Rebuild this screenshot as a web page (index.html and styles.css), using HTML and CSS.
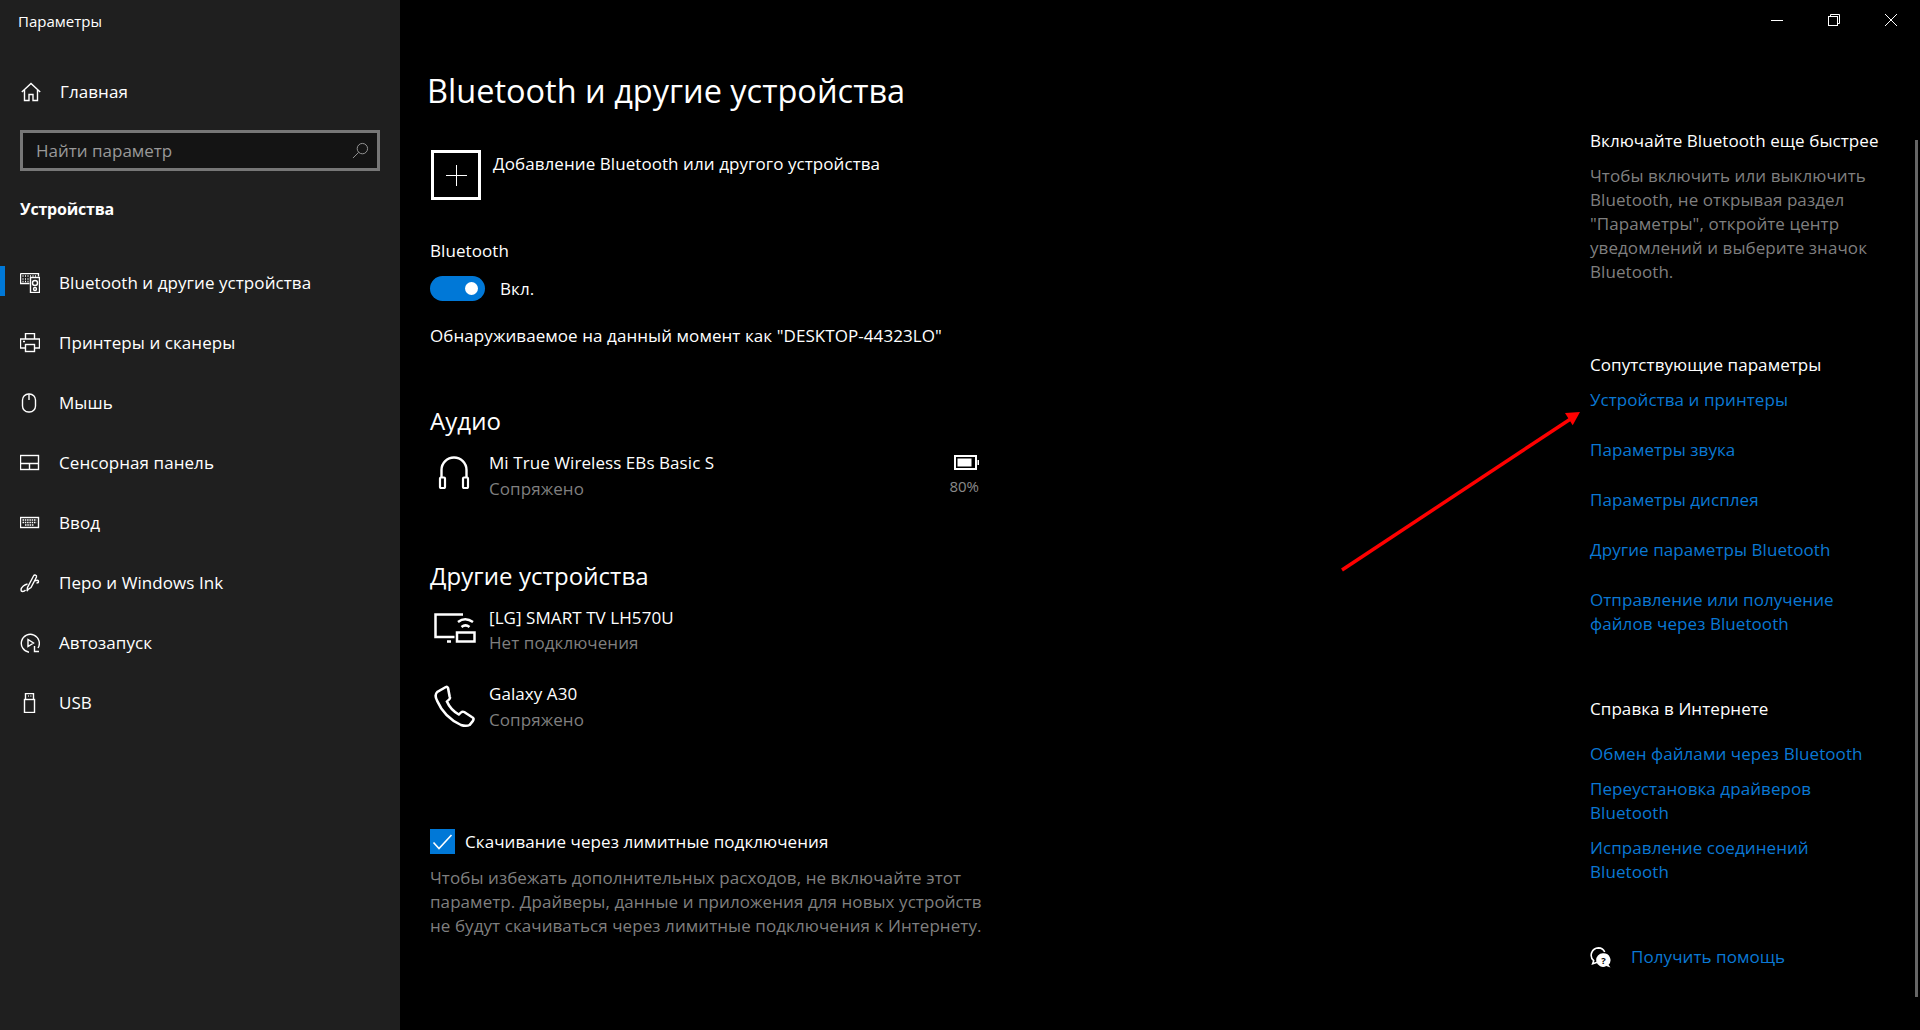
FILE: index.html
```html
<!DOCTYPE html>
<html lang="ru">
<head>
<meta charset="utf-8">
<title>Параметры</title>
<link rel="stylesheet" href="styles.css">
</head>
<body>
<div class="app">
  <aside class="sidebar">
    <div class="app-title">Параметры</div>
    <div class="nav-row home">
      <svg class="nav-icon" viewBox="0 0 20 20"><path d="M.8 10 10 1.500 19.200 10M3.500 8v10.500h4.500v-6h4v6h4.500V8"/></svg>
      <span>Главная</span>
    </div>
    <div class="search">
      <span class="search-text">Найти параметр</span>
      <svg class="search-icon" viewBox="0 0 18 18"><circle cx="11" cy="7" r="5.500"/><path d="M7 11 1 17"/></svg>
    </div>
    <div class="group-title">Устройства</div>
    <nav class="nav">
      <div class="nav-row active">
        <svg class="nav-icon" viewBox="0 0 20 20"><path d="M.5.500h18v3M.5.500v10h9"/><path d="M2.500 3h1M5 3h1M7.500 3h1M10 3h1M12.500 3h1M15 3h1M2.500 6h1M5 6h1M7.500 6h1M2.500 8.500h1M5 8.500h1M7.500 8.500h1" stroke-width="1.500"/><rect x="10.500" y="4.500" width="9" height="15"/><circle cx="15" cy="10" r="2.500"/><circle cx="15" cy="16" r="1.500"/></svg>
        <span>Bluetooth и другие устройства</span>
      </div>
      <div class="nav-row">
        <svg class="nav-icon" viewBox="0 0 20 20"><path d="M5.500 6V.5h9V6M5 15H.5V6h19v9H15"/><rect x="5.500" y="11.500" width="9" height="7"/><path d="M3 8.500h2"/></svg>
        <span>Принтеры и сканеры</span>
      </div>
      <div class="nav-row">
        <svg class="nav-icon" viewBox="0 0 20 20"><rect x="2.500" y="1" width="13" height="18" rx="6"/><path d="M9 1v6"/></svg>
        <span>Мышь</span>
      </div>
      <div class="nav-row">
        <svg class="nav-icon" viewBox="0 0 20 20"><rect x=".5" y="2.500" width="18" height="14"/><path d="M.5 10.500h18M9.500 10.500v6"/></svg>
        <span>Сенсорная панель</span>
      </div>
      <div class="nav-row">
        <svg class="nav-icon" viewBox="0 0 20 20"><rect x=".5" y="4.500" width="18" height="10"/><path d="M2.500 7h14M2.500 9.500h14M5 12h9" stroke-width="1.500" stroke-dasharray="1.500 .8"/></svg>
        <span>Ввод</span>
      </div>
      <div class="nav-row">
        <svg class="nav-icon" viewBox="0 0 20 20"><path d="M8 16.500 7 18l.5-3.500L13.500 3c1-1.800 3.500-.8 3 1L11 14.500ZM15 8c1.500-1 3.500-1 3.500.5 0 1-1 1.500-2 1.500M7.500 11C5 11.500 1 14 1 17c0 2 3 2 4.500 0"/></svg>
        <span>Перо и Windows Ink</span>
      </div>
      <div class="nav-row">
        <svg class="nav-icon" viewBox="0 0 20 20"><path d="M9 19.200A9 9 0 1 1 18 15M14.500 13v5.500h4.500M8 6.500v7l5.500-3.500Z"/></svg>
        <span>Автозапуск</span>
      </div>
      <div class="nav-row">
        <svg class="nav-icon" viewBox="0 0 20 20"><rect x="4.500" y="6.500" width="10" height="13"/><path d="M5.500 6.500V.5h8v6M8 3h.8M10.500 3h.8"/></svg>
        <span>USB</span>
      </div>
    </nav>
  </aside>

  <main class="main">
    <header class="window-bar">
      <button class="win-btn" type="button" aria-label="Свернуть"><svg viewBox="0 0 12 12"><path d="M0 6.500h12"/></svg></button>
      <button class="win-btn" type="button" aria-label="Восстановить"><svg viewBox="0 0 12 12"><rect x=".5" y="2.500" width="9" height="9"/><path d="M2.500 2.500v-2h9v9h-2"/></svg></button>
      <button class="win-btn" type="button" aria-label="Закрыть"><svg viewBox="0 0 12 12"><path d="M0 0 12 12M12 0 0 12"/></svg></button>
    </header>
    <div class="columns">
      <section class="content">
        <h1 class="page-title">Bluetooth и другие устройства</h1>
        <div class="add-row">
          <div class="add-box"><svg viewBox="0 0 21 21"><path d="M10.500 0v21M0 10.500h21"/></svg></div>
          <span class="add-text">Добавление Bluetooth или другого устройства</span>
        </div>
        <div class="line bt-label">Bluetooth</div>
        <div class="toggle-row">
          <span class="toggle"><span class="knob"></span></span>
          <span class="toggle-text">Вкл.</span>
        </div>
        <div class="line discover">Обнаруживаемое на данный момент как "DESKTOP-44323LO"</div>

        <h2 class="section audio">Аудио</h2>
        <div class="device first-audio">
          <div class="device-icon">
            <svg class="headphones" viewBox="0 0 32 33"><path d="M3.500 22V14a12.500 12.500 0 0 1 25 0v8" stroke-width="2.400"/><rect x="2" y="21.500" width="5" height="10.500" rx="1" stroke-width="2.200"/><rect x="25" y="21.500" width="5" height="10.500" rx="1" stroke-width="2.200"/></svg>
          </div>
          <div class="device-info">
            <div class="device-name">Mi True Wireless EBs Basic S</div>
            <div class="device-state">Сопряжено</div>
          </div>
          <div class="battery">
            <svg class="battery-icon" viewBox="0 0 25 15"><rect x="1" y="1" width="21" height="13" stroke-width="2"/><rect x="3.500" y="3.500" width="14" height="8" class="fill"/><rect x="23.500" y="5" width="1.500" height="5" class="fill"/></svg>
            <span class="battery-level">80%</span>
          </div>
        </div>

        <h2 class="section others">Другие устройства</h2>
        <div class="device first-other">
          <div class="device-icon">
            <svg class="tv" viewBox="0 0 42 30"><path d="M29 1.500H1.500v22.500h19M13 28.500h4" stroke-width="2.500"/><rect x="23" y="19.500" width="17.500" height="9" stroke-width="2.500"/><path d="M24 9c4.500-3.500 10-3.500 15 0M27.500 14c2.500-2 5.500-2 8 0" stroke-width="2.500"/></svg>
          </div>
          <div class="device-info">
            <div class="device-name">[LG] SMART TV LH570U</div>
            <div class="device-state">Нет подключения</div>
          </div>
        </div>
        <div class="device second-other">
          <div class="device-icon">
            <svg class="phone" viewBox="0 0 38 42" preserveAspectRatio="none"><path d="M11 2 3 7c-2 2-2 5 0 9 4 10 12 19 22 24 3 1 6 1 8 0l3-4c1-2 1-3-1-4l-7-5c-1-.5-2-.5-3 .5l-2 2c-5-3-9-8-11-13l2-2c1-1 1-2 .5-3L13 3c-.5-1-1-1.500-2-1Z" stroke-width="2.400"/></svg>
          </div>
          <div class="device-info">
            <div class="device-name">Galaxy A30</div>
            <div class="device-state">Сопряжено</div>
          </div>
        </div>

        <div class="check-row">
          <span class="checkbox"><svg viewBox="0 0 25 25"><path d="M3.500 13.500 9 19.500 21.500 6"/></svg></span>
          <span>Скачивание через лимитные подключения</span>
        </div>
        <p class="muted check-note">Чтобы избежать дополнительных расходов, не включайте этот<br>параметр. Драйверы, данные и приложения для новых устройств<br>не будут скачиваться через лимитные подключения к Интернету.</p>
      </section>

      <section class="side">
        <h3 class="side-title quick">Включайте Bluetooth еще быстрее</h3>
        <p class="muted quick-text">Чтобы включить или выключить<br>Bluetooth, не открывая раздел<br>"Параметры", откройте центр<br>уведомлений и выберите значок<br>Bluetooth.</p>
        <h3 class="side-title related">Сопутствующие параметры</h3>
        <div class="links links-wide">
          <a class="link">Устройства и принтеры</a>
          <a class="link">Параметры звука</a>
          <a class="link">Параметры дисплея</a>
          <a class="link">Другие параметры Bluetooth</a>
          <a class="link">Отправление или получение<br>файлов через Bluetooth</a>
        </div>
        <h3 class="side-title web">Справка в Интернете</h3>
        <div class="links links-tight">
          <a class="link">Обмен файлами через Bluetooth</a>
          <a class="link">Переустановка драйверов<br>Bluetooth</a>
          <a class="link">Исправление соединений<br>Bluetooth</a>
        </div>
        <div class="help">
          <svg class="help-icon" viewBox="0 0 20 20"><path class="fill" d="M13 6a6.500 6.500 0 0 1 4.700 11l1.800 2.500-4-1.300A6.500 6.500 0 1 1 13 6Z"/><path d="M7 14.500 2.500 16l1-3A7 7 0 0 1 8 .8c3 0 5 1.500 6 4" stroke-width="1.500"/><text x="13" y="16" class="help-mark">?</text></svg>
          <a class="link">Получить помощь</a>
        </div>
      </section>
    </div>
    <div class="scrollbar"></div>
    <svg class="arrow" viewBox="0 0 250 170"><path class="arrow-line" d="M2 160 232 8"/><path class="arrow-head" d="M240 2 225 3 232.700 15.300Z"/></svg>
  </main>
</div>
</body>
</html>
```
FILE: styles.css
```css
* { box-sizing: border-box; }
html, body { margin: 0; height: 100%; }
body {
  background: #000;
  color: #fff;
  font-family: "Open Sans", "Noto Sans", sans-serif;
  font-size: 17px;
  letter-spacing: 0.07px;
  line-height: 24px;
  overflow: hidden;
}
svg { display: block; fill: none; stroke: #fff; stroke-width: 1; }
svg .fill { fill: #fff; stroke: none; }
h1, h2, h3, p { margin: 0; font-weight: 400; font-size: inherit; }

.app { display: flex; height: 1030px; }

/* Sidebar */
.sidebar { width: 400px; flex: none; background: #1f1f1f; }
.app-title { height: 43px; padding-left: 18px; font-size: 15px; line-height: 43px; letter-spacing: 0; }
.nav-row {
  position: relative;
  display: flex;
  align-items: center;
  height: 60px;
  padding-left: 20px;
  gap: 19px;
}
.nav-icon { width: 20px; height: 20px; flex: none; stroke-width: 1.400; }
.home { margin-top: 19px; padding-left: 21px; }
.search {
  display: flex;
  align-items: center;
  justify-content: space-between;
  width: 360px;
  height: 41px;
  margin: 8px 0 0 20px;
  padding: 0 8px 0 13px;
  background: #141414;
  border: 3px solid #777;
  color: #999;
  letter-spacing: 0;
}
.search-icon { width: 17px; height: 17px; stroke: #999; }
.group-title { margin: 26px 0 0 20px; font-size: 16px; font-weight: 700; letter-spacing: -0.2px; }
.nav { margin-top: 32px; }
.active::before {
  content: "";
  position: absolute;
  left: 0;
  top: 13px;
  width: 5px;
  height: 30px;
  background: #0078d7;
}

/* Main */
.main { position: relative; flex: 1; min-width: 0; }
.window-bar { display: flex; justify-content: flex-end; height: 40px; padding-right: 1px; }
.win-btn {
  display: flex;
  align-items: center;
  justify-content: center;
  width: 57px;
  height: 40px;
  padding: 0;
  background: none;
  border: 0;
}
.win-btn svg { width: 12px; height: 12px; }
.columns { display: flex; }
.content { width: 1190px; flex: none; padding-left: 30px; }
.page-title { margin: 27px 0 0 -3px; font-size: 32.500px; line-height: 48px; letter-spacing: 0; }
.add-row { display: flex; margin: 35px 0 0 1px; gap: 12px; }
.add-box {
  display: flex;
  align-items: center;
  justify-content: center;
  width: 50px;
  height: 50px;
  border: 3px solid #fff;
}
.add-box svg { width: 21px; height: 21px; }
.add-text { line-height: 28px; }
.bt-label { margin-top: 39px; }
.toggle-row { display: flex; align-items: center; gap: 15px; height: 25px; margin-top: 13px; }
.toggle {
  display: flex;
  align-items: center;
  justify-content: flex-end;
  width: 55px;
  height: 25px;
  padding-right: 7px;
  background: #0078d7;
  border-radius: 13px;
}
.knob { width: 13px; height: 13px; background: #fff; border-radius: 50%; }
.discover { margin-top: 23px; }
.section { font-size: 24px; line-height: 32px; }
.audio { margin-top: 57px; }
.others { margin-top: 58px; }
.device { display: flex; width: 550px; margin-left: -1px; }
.first-audio { margin-top: 13px; }
.first-other { margin-top: 13px; }
.first-other .device-state { margin-top: -1px; }
.second-other { margin-top: 25px; }
.device-icon { display: flex; width: 60px; flex: none; align-items: flex-start; }
.device-info { flex: 1; line-height: 26px; }
.device-state { color: #7f7f7f; }
.headphones { width: 32px; height: 33px; margin: 6px 0 0 9px; }
.tv { width: 42px; height: 30px; margin: 8px 0 0 5px; }
.phone { width: 41px; height: 42px; margin: 4px 0 0 5px; }
.battery { display: flex; flex-direction: column; align-items: flex-end; width: 31px; margin-top: 5px; }
.battery-icon { width: 25px; height: 15px; flex: none; }
.battery-level { margin-top: 5px; color: #8a8a8a; font-size: 15px; line-height: 22px; letter-spacing: 0; }
.check-row { display: flex; align-items: center; gap: 10px; height: 25px; margin-top: 96px; }
.checkbox { width: 25px; height: 25px; background: #0078d7; }
.checkbox svg { width: 25px; height: 25px; stroke-width: 1.600; }
.muted { color: #7f7f7f; }
.check-note { margin-top: 12px; }

/* Right column */
.side { flex: 1; }
.quick { margin-top: 89px; }
.quick-text { margin-top: 11px; }
.related { margin-top: 69px; }
.web { margin-top: 61px; }
.links { display: flex; flex-direction: column; align-items: flex-start; }
.links-wide { gap: 26px; margin-top: 11px; }
.links-tight { gap: 11px; margin-top: 21px; }
.link { color: #0a78d4; }
.help { display: flex; align-items: center; gap: 20px; margin-top: 61px; }
.help-icon { width: 21px; height: 21px; flex: none; }
.help-mark { fill: #000; stroke: none; font-size: 9px; font-weight: 700; text-anchor: middle; }

.scrollbar {
  position: absolute;
  right: 2px;
  top: 140px;
  width: 3px;
  height: 857px;
  background: #666;
}
.arrow { position: absolute; left: 940px; top: 410px; width: 250px; height: 170px; }
.arrow-line { stroke: #f00; stroke-width: 3.500; }
.arrow-head { fill: #f00; stroke: none; }
```
